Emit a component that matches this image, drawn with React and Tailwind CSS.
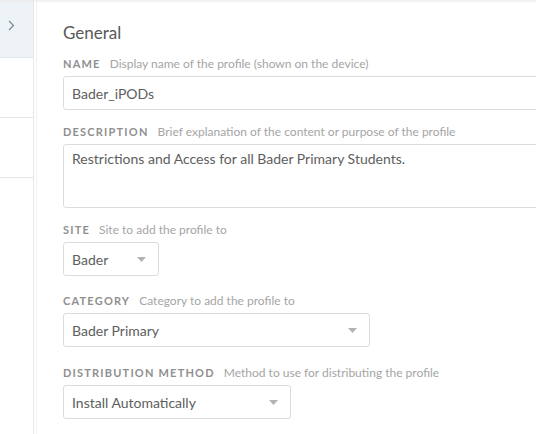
import React from 'react';

const font = { fontFamily: 'Lato, "Open Sans", sans-serif' };

const Caret = () => (
    <svg width="9" height="5" viewBox="0 0 9 5" className="shrink-0">
        <path d="M0 0 L9 0 L4.5 5 Z" fill="#b3b3b3" />
    </svg>
);

const Label = ({ title, hint }) => (
    <div className="flex items-baseline gap-[9px] mb-[6px] h-[15px]">
        <span className="text-[11px] font-bold tracking-[1.2px] text-[#8f8f8f]">{title}</span>
        <span className="text-[12px] text-[#a5a5a5]">{hint}</span>
    </div>
);

const Select = ({ value, width }) => (
    <div
        className="flex items-center h-[34px] border border-[#dcdcdc] rounded-[3px] bg-white pl-[8px] pr-[12px]"
        style={{ width }}
    >
        <span className="text-[14px] text-[#5e5e5e]">{value}</span>
        <div className="flex-1" />
        <Caret />
    </div>
);

const App = () => {
    return (
        <div className="flex h-screen w-full bg-white overflow-hidden relative" style={font}>
            <div className="absolute top-0 left-0 right-0 h-[3px] bg-gradient-to-b from-[#ececec] to-transparent" />
            {/* Sidebar */}
            <div className="w-[34px] shrink-0 border-r border-[#e6e6e6] flex flex-col">
                <div className="h-[58px] bg-[#eef3f7] border-b border-[#e3e8ec] flex items-start pt-[20px] pl-[8px]">
                    <svg width="7" height="11" viewBox="0 0 7 11">
                        <path d="M1 1 L5.5 5.5 L1 10" fill="none" stroke="#7d8790" strokeWidth="1.2" />
                    </svg>
                </div>
                <div className="h-[60px] border-b border-[#e6e6e6]" />
                <div className="h-[60px] border-b border-[#e6e6e6]" />
            </div>
            <div className="w-[2px] shrink-0" />
            {/* Main */}
            <div className="flex-1 border-l border-[#f1f1f1] pl-[26px] pt-[23px] overflow-hidden">
                <h1 className="text-[17px] text-[#585858] leading-[20px] mb-[12px]">General</h1>

                <Label title="NAME" hint="Display name of the profile (shown on the device)" />
                <div className="w-[520px] h-[34px] border border-[#dcdcdc] rounded-[3px] flex items-center pl-[8px]">
                    <span className="text-[14px] text-[#5e5e5e]">Bader_iPODs</span>
                </div>

                <div className="mt-[13px]">
                    <Label title="DESCRIPTION" hint="Brief explanation of the content or purpose of the profile" />
                    <div className="w-[520px] h-[64px] border border-[#dcdcdc] rounded-[3px] pl-[8px] pt-[3px] leading-[20px]">
                        <span className="text-[14px] text-[#5e5e5e]">Restrictions and Access for all Bader Primary Students.</span>
                    </div>
                </div>

                <div className="mt-[13px]">
                    <Label title="SITE" hint="Site to add the profile to" />
                    <Select value="Bader" width="96px" />
                </div>

                <div className="mt-[16px]">
                    <Label title="CATEGORY" hint="Category to add the profile to" />
                    <Select value="Bader Primary" width="307px" />
                </div>

                <div className="mt-[17px]">
                    <Label title="DISTRIBUTION METHOD" hint="Method to use for distributing the profile" />
                    <Select value="Install Automatically" width="228px" />
                </div>
            </div>
        </div>
    );
};

export default App;
